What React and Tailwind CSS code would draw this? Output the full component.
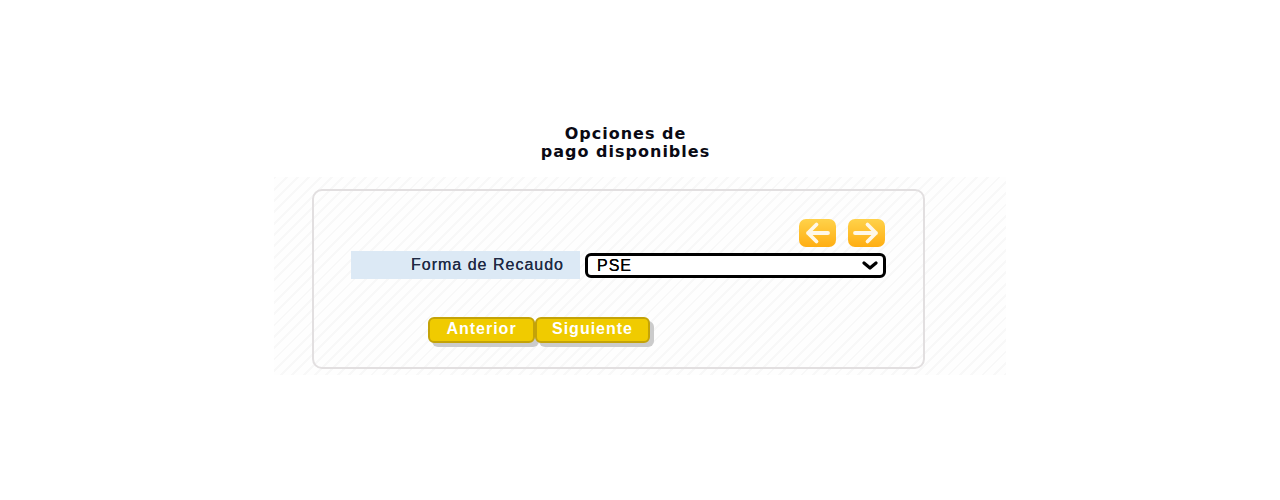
function ArrowButton({ direction }) {
  const id = `arrow-${direction}`
  return (
    <svg width="37" height="28" viewBox="0 0 37 28" aria-hidden="true">
      <defs>
        <linearGradient id={id} x1="0" y1="0" x2="0" y2="1">
          <stop offset="0" stopColor="#ffd24a" />
          <stop offset="1" stopColor="#ffae12" />
        </linearGradient>
      </defs>
      <rect width="37" height="28" rx="7" fill={`url(#${id})`} />
      <path
        d={direction === 'left' ? 'M29 14H9M17.500 5.500L9 14l8.500 8.500' : 'M7 14h21M19.500 5.500L28 14l-8.500 8.500'}
        fill="none"
        stroke="#fff8e8"
        strokeWidth="3.800"
        strokeLinecap="round"
        strokeLinejoin="round"
      />
    </svg>
  )
}

function YellowButton({ label, width }) {
  return (
    <button
      type="button"
      className={`${width} h-[26px] rounded-[6px] border-2 border-[#c4a308] bg-[#f0cb00] pb-[2px] text-[16px] leading-[16px] font-bold tracking-[1px] text-white shadow-[4px_4px_0_#cbcbcb]`}
    >
      {label}
    </button>
  )
}

export default function App() {
  return (
    <div className="h-[500px] overflow-hidden bg-white pt-[125px] font-['Liberation_Sans',Arial,sans-serif]">
      <h1 className="w-[1251px] text-center font-['DejaVu_Sans',Verdana,sans-serif] text-[16px] leading-[18px] font-bold tracking-[1px] text-[#0a0a14]">
        Opciones de
        <br />
        pago disponibles
      </h1>
      <div className="mt-[16px] ml-[274px] h-[198px] w-[732px] bg-[repeating-linear-gradient(135deg,#f8f8f8_0,#f8f8f8_2px,#fefefe_2px,#fefefe_8px)] pt-[12px] pl-[38px]">
        <div className="h-[180px] w-[613px] rounded-[10px] border-2 border-[#e2dfe0] pt-[28px] pl-[37px]">
          <div className="flex w-[534px] justify-end gap-[12px]">
            <ArrowButton direction="left" />
            <ArrowButton direction="right" />
          </div>
          <div className="mt-[4px] flex h-[28px] items-start gap-[5px]">
            <label className="flex h-[28px] w-[229px] items-center justify-end bg-[#dce9f5] pr-[16px] text-[16px] tracking-[1px] text-[#1f2a44] [text-shadow:0_0_0.6px_#1f2a44]">
              Forma de Recaudo
            </label>
            <div className="relative mt-[2px] h-[25px] w-[301px]">
              <select className="h-full w-full appearance-none rounded-[6px] border-[3px] border-black bg-white pl-[9px] text-[16px] leading-[16px] tracking-[1px] text-black [text-shadow:0_0_0.6px_#000]">
                <option>PSE</option>
              </select>
              <svg
                width="16"
                height="9"
                viewBox="0 0 16 9"
                aria-hidden="true"
                className="pointer-events-none absolute top-[8px] right-[8px]"
              >
                <path d="M2 2l6 5 6-5" fill="none" stroke="#000" strokeWidth="3.200" strokeLinecap="round" strokeLinejoin="round" />
              </svg>
            </div>
          </div>
          <div className="mt-[38px] ml-[77px] flex">
            <YellowButton label="Anterior" width="w-[107px]" />
            <YellowButton label="Siguiente" width="w-[115px]" />
          </div>
        </div>
      </div>
    </div>
  )
}
